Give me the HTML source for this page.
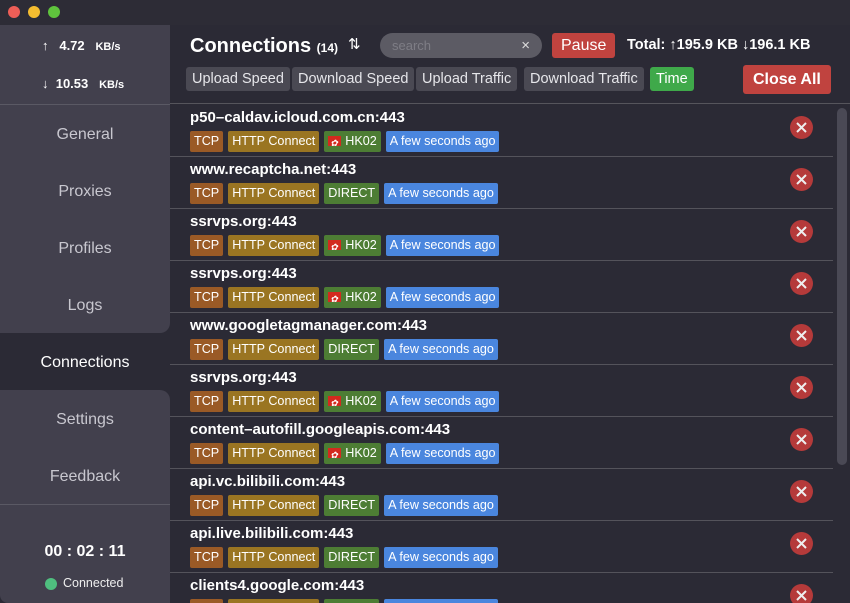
<!DOCTYPE html>
<html><head><meta charset="utf-8"><style>
*{margin:0;padding:0;box-sizing:border-box}
html,body{width:850px;height:603px;overflow:hidden}
body{background:#2b2a35;font-family:"Liberation Sans",Arial,sans-serif;color:#fff;position:relative}
.tb{position:absolute;left:0;top:0;width:850px;height:25px;background:#2d2c36}
.dot{position:absolute;top:6px;width:12px;height:12px;border-radius:50%}
.side{position:absolute;left:0;top:25px;width:170px;height:578px;background:#2b2a35}
.sb{position:absolute;left:0;width:170px;background:#42404d}
.nav{position:absolute;left:0;width:170px;text-align:center;font-size:16px;color:#c8c7cf}
.main{position:absolute;left:170px;top:25px;width:680px;height:578px;background:#2b2a35}
.btn{position:absolute;height:24px;line-height:24px;font-size:14.5px;padding:0 6px;border-radius:3px;background:#4a4953;color:#e6e6ea}
.rows{position:absolute;left:0;top:0;width:850px;height:603px;overflow:hidden}
.row{position:absolute;left:170px;width:663px;height:52px;border-bottom:1px solid #54535b}
.host{position:absolute;left:20px;top:4px;font-size:15px;font-weight:bold}
.tags{position:absolute;left:20px;top:26px;display:flex;gap:5px}
.t{height:21px;line-height:21px;font-size:12.6px;padding:0 4px;border-radius:2px;color:#fff}
.tcp{background:#9a5a26}.http{background:#9a7522}.dir{background:#4d7d34}.time{background:#4a86de}
.flag{display:inline-block;width:13px;height:10px;background:#d32a1e;margin-right:4px;vertical-align:-1px;position:relative}
.flag:after{content:"✿";position:absolute;left:2px;top:-3px;font-size:9px;color:#fff}
.x{position:absolute;right:20px;top:11px;width:23px;height:23px;border-radius:50%;background:#b53a3a}
.x svg{position:absolute;left:6px;top:6px}
</style></head><body>
<div class="tb">
<div class="dot" style="left:8px;background:#ee5e57"></div>
<div class="dot" style="left:28px;background:#f5bd30"></div>
<div class="dot" style="left:48px;background:#5fc43d"></div>
</div>
<div class="side">
<div class="sb" style="top:0;height:308px;border-bottom-right-radius:10px"></div>
<div class="sb" style="top:365px;height:213px;border-top-right-radius:10px;border-bottom-left-radius:8px"></div>
<div style="position:absolute;left:0;top:79px;width:170px;height:1px;background:#5a5964"></div>
<div style="position:absolute;left:0;top:479px;width:170px;height:1px;background:#5a5964"></div>
<div style="position:absolute;left:42px;top:13px;font-size:13px;font-weight:bold">↑ &nbsp;&nbsp;4.72 &nbsp;&nbsp;<span style="font-size:11px">KB/s</span></div>
<div style="position:absolute;left:42px;top:51px;font-size:13px;font-weight:bold">↓ &nbsp;10.53 &nbsp;&nbsp;<span style="font-size:11px">KB/s</span></div>
<div class="nav" style="top:101px">General</div>
<div class="nav" style="top:158px">Proxies</div>
<div class="nav" style="top:215px">Profiles</div>
<div class="nav" style="top:272px">Logs</div>
<div class="nav" style="top:329px;color:#fff">Connections</div>
<div class="nav" style="top:386px">Settings</div>
<div class="nav" style="top:443px">Feedback</div>
<div style="position:absolute;left:0;width:170px;top:518px;text-align:center;font-size:16px;font-weight:bold">00 : 02 : 11</div>
<div style="position:absolute;left:45px;top:553px;width:12px;height:12px;border-radius:50%;background:#4fbf7f"></div>
<div style="position:absolute;left:63px;top:551px;font-size:12.5px;color:#eee">Connected</div>
</div>
<div class="main">
<div style="position:absolute;left:20px;top:10px;font-size:20px;font-weight:bold">Connections <span style="font-size:12px">(14)</span></div>
<div style="position:absolute;left:178px;top:10px;font-size:15px">⇅</div>
<div style="position:absolute;left:210px;top:8px;width:162px;height:25px;border-radius:13px;background:#5c5b64;color:#7e7d85;font-size:13px;line-height:25px;padding-left:12px">search<span style="position:absolute;right:12px;color:#ddd;font-size:15px">×</span></div>
<div class="btn" style="left:382px;top:8px;background:#c0433f;color:#fff;font-size:16px;padding:0 9px;height:25px;line-height:25px">Pause</div>
<div style="position:absolute;left:457px;top:12px;font-size:14.5px;font-weight:bold">Total: ↑195.9 KB ↓196.1 KB</div>
<div class="btn" style="left:16px;top:42px">Upload Speed</div>
<div class="btn" style="left:122px;top:42px">Download Speed</div>
<div class="btn" style="left:246px;top:42px">Upload Traffic</div>
<div class="btn" style="left:354px;top:42px">Download Traffic</div>
<div class="btn" style="left:480px;top:42px;background:#3fa94a;color:#fff">Time</div>
<div class="btn" style="left:573px;top:40px;background:#c0433f;color:#fff;font-size:16px;height:29px;line-height:29px;padding:0 10px;font-weight:bold">Close All</div>
<div style="position:absolute;left:0;top:78px;width:680px;height:1px;background:#56555c"></div>
<div style="position:absolute;left:667px;top:83px;width:10px;height:357px;border-radius:5px;background:#4a4955"></div>
</div>
<div class="rows">
<div class="row" style="top:105px"><div class="host">p50–caldav.icloud.com.cn:443</div><div class="tags"><span class="t tcp">TCP</span><span class="t http">HTTP Connect</span><span class="t dir"><i class="flag"></i>HK02</span><span class="t time">A few seconds ago</span></div><div class="x"><svg width="11" height="11"><path d="M1 1L10 10M10 1L1 10" stroke="#eee" stroke-width="2"/></svg></div></div>
<div class="row" style="top:157px"><div class="host">www.recaptcha.net:443</div><div class="tags"><span class="t tcp">TCP</span><span class="t http">HTTP Connect</span><span class="t dir">DIRECT</span><span class="t time">A few seconds ago</span></div><div class="x"><svg width="11" height="11"><path d="M1 1L10 10M10 1L1 10" stroke="#eee" stroke-width="2"/></svg></div></div>
<div class="row" style="top:209px"><div class="host">ssrvps.org:443</div><div class="tags"><span class="t tcp">TCP</span><span class="t http">HTTP Connect</span><span class="t dir"><i class="flag"></i>HK02</span><span class="t time">A few seconds ago</span></div><div class="x"><svg width="11" height="11"><path d="M1 1L10 10M10 1L1 10" stroke="#eee" stroke-width="2"/></svg></div></div>
<div class="row" style="top:261px"><div class="host">ssrvps.org:443</div><div class="tags"><span class="t tcp">TCP</span><span class="t http">HTTP Connect</span><span class="t dir"><i class="flag"></i>HK02</span><span class="t time">A few seconds ago</span></div><div class="x"><svg width="11" height="11"><path d="M1 1L10 10M10 1L1 10" stroke="#eee" stroke-width="2"/></svg></div></div>
<div class="row" style="top:313px"><div class="host">www.googletagmanager.com:443</div><div class="tags"><span class="t tcp">TCP</span><span class="t http">HTTP Connect</span><span class="t dir">DIRECT</span><span class="t time">A few seconds ago</span></div><div class="x"><svg width="11" height="11"><path d="M1 1L10 10M10 1L1 10" stroke="#eee" stroke-width="2"/></svg></div></div>
<div class="row" style="top:365px"><div class="host">ssrvps.org:443</div><div class="tags"><span class="t tcp">TCP</span><span class="t http">HTTP Connect</span><span class="t dir"><i class="flag"></i>HK02</span><span class="t time">A few seconds ago</span></div><div class="x"><svg width="11" height="11"><path d="M1 1L10 10M10 1L1 10" stroke="#eee" stroke-width="2"/></svg></div></div>
<div class="row" style="top:417px"><div class="host">content–autofill.googleapis.com:443</div><div class="tags"><span class="t tcp">TCP</span><span class="t http">HTTP Connect</span><span class="t dir"><i class="flag"></i>HK02</span><span class="t time">A few seconds ago</span></div><div class="x"><svg width="11" height="11"><path d="M1 1L10 10M10 1L1 10" stroke="#eee" stroke-width="2"/></svg></div></div>
<div class="row" style="top:469px"><div class="host">api.vc.bilibili.com:443</div><div class="tags"><span class="t tcp">TCP</span><span class="t http">HTTP Connect</span><span class="t dir">DIRECT</span><span class="t time">A few seconds ago</span></div><div class="x"><svg width="11" height="11"><path d="M1 1L10 10M10 1L1 10" stroke="#eee" stroke-width="2"/></svg></div></div>
<div class="row" style="top:521px"><div class="host">api.live.bilibili.com:443</div><div class="tags"><span class="t tcp">TCP</span><span class="t http">HTTP Connect</span><span class="t dir">DIRECT</span><span class="t time">A few seconds ago</span></div><div class="x"><svg width="11" height="11"><path d="M1 1L10 10M10 1L1 10" stroke="#eee" stroke-width="2"/></svg></div></div>
<div class="row" style="top:573px"><div class="host">clients4.google.com:443</div><div class="tags"><span class="t tcp">TCP</span><span class="t http">HTTP Connect</span><span class="t dir">DIRECT</span><span class="t time">A few seconds ago</span></div><div class="x"><svg width="11" height="11"><path d="M1 1L10 10M10 1L1 10" stroke="#eee" stroke-width="2"/></svg></div></div>
</div>
</body></html>
